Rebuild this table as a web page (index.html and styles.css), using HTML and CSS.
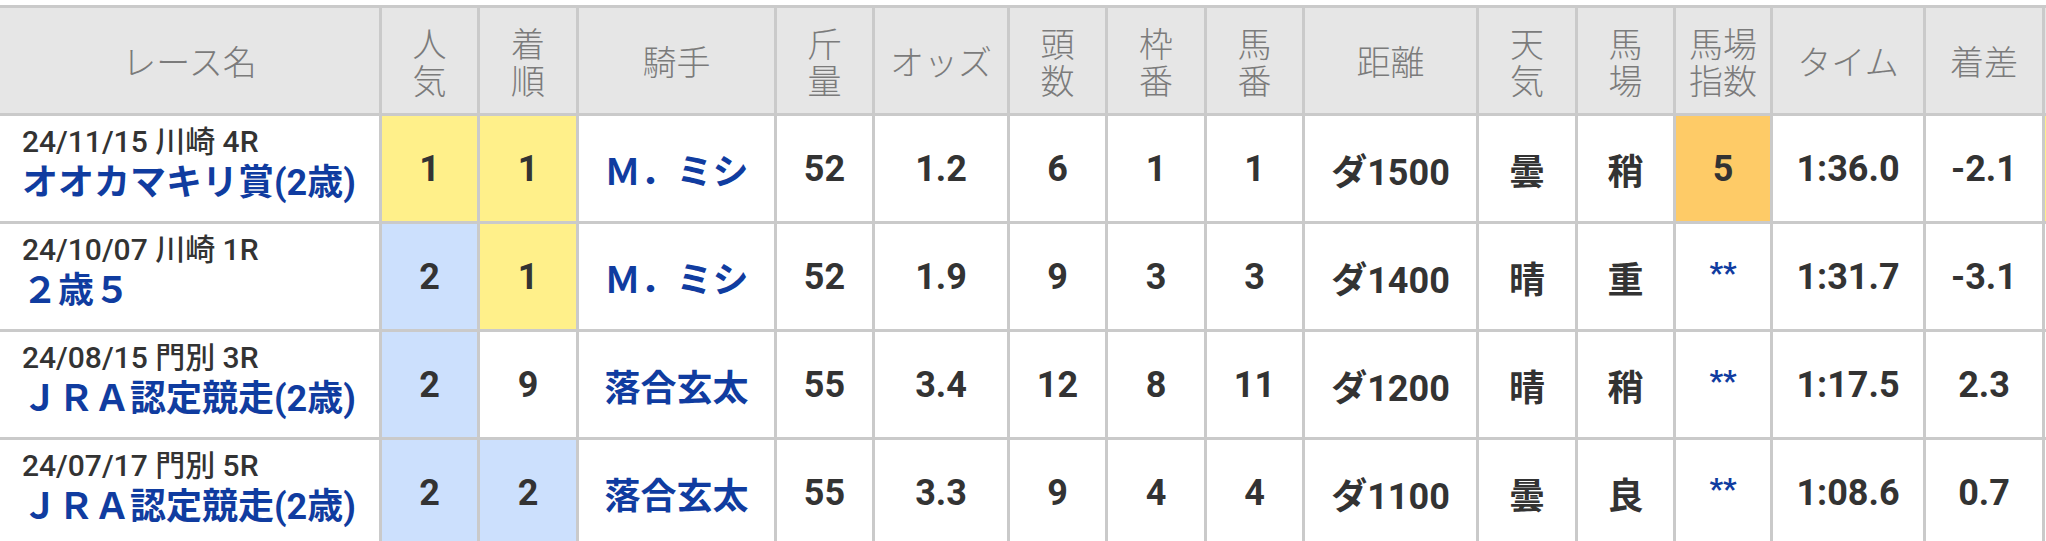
FILE: index.html
```html
<!DOCTYPE html>
<html lang="ja">
<head>
<meta charset="utf-8">
<title>戦績</title>
<link rel="stylesheet" href="styles.css">
</head>
<body>
<div class="wrap">
<table class="results">
  <thead>
    <tr>
      <th class="w-race">レース名</th>
      <th class="w-98">人<br>気</th>
      <th class="w-99">着<br>順</th>
      <th class="w-jockey">騎手</th>
      <th class="w-98">斤<br>量</th>
      <th class="w-odds">オッズ</th>
      <th class="w-98">頭<br>数</th>
      <th class="w-99">枠<br>番</th>
      <th class="w-98">馬<br>番</th>
      <th class="w-dist">距離</th>
      <th class="w-99">天<br>気</th>
      <th class="w-98">馬<br>場</th>
      <th class="w-97">馬場<br>指数</th>
      <th class="w-time">タイム</th>
      <th class="w-diff">着差</th>
      <th class="w-extra">&nbsp;</th>
    </tr>
  </thead>
  <tbody>
    <tr>
      <td class="race"><div class="date">24/11/15 川崎 4R</div><div class="name">オオカマキリ賞(2歳)</div></td>
      <td class="yellow">1</td>
      <td class="yellow">1</td>
      <td class="link">Ｍ．ミシ</td>
      <td>52</td>
      <td>1.2</td>
      <td>6</td>
      <td>1</td>
      <td>1</td>
      <td>ダ1500</td>
      <td>曇</td>
      <td>稍</td>
      <td class="orange">5</td>
      <td>1:36.0</td>
      <td>-2.1</td>
      <td class="yellow"></td>
    </tr>
    <tr>
      <td class="race"><div class="date">24/10/07 川崎 1R</div><div class="name">２歳５</div></td>
      <td class="blue">2</td>
      <td class="yellow">1</td>
      <td class="link">Ｍ．ミシ</td>
      <td>52</td>
      <td>1.9</td>
      <td>9</td>
      <td>3</td>
      <td>3</td>
      <td>ダ1400</td>
      <td>晴</td>
      <td>重</td>
      <td class="stars">**</td>
      <td>1:31.7</td>
      <td>-3.1</td>
      <td></td>
    </tr>
    <tr>
      <td class="race"><div class="date">24/08/15 門別 3R</div><div class="name">ＪＲＡ認定競走(2歳)</div></td>
      <td class="blue">2</td>
      <td>9</td>
      <td class="link">落合玄太</td>
      <td>55</td>
      <td>3.4</td>
      <td>12</td>
      <td>8</td>
      <td>11</td>
      <td>ダ1200</td>
      <td>晴</td>
      <td>稍</td>
      <td class="stars">**</td>
      <td>1:17.5</td>
      <td>2.3</td>
      <td></td>
    </tr>
    <tr>
      <td class="race"><div class="date">24/07/17 門別 5R</div><div class="name">ＪＲＡ認定競走(2歳)</div></td>
      <td class="blue">2</td>
      <td class="blue">2</td>
      <td class="link">落合玄太</td>
      <td>55</td>
      <td>3.3</td>
      <td>9</td>
      <td>4</td>
      <td>4</td>
      <td>ダ1100</td>
      <td>曇</td>
      <td>良</td>
      <td class="stars">**</td>
      <td>1:08.6</td>
      <td>0.7</td>
      <td></td>
    </tr>
  </tbody>
</table>
</div>
</body>
</html>
```

FILE: styles.css
```css
html, body {
  margin: 0;
  padding: 0;
  background: #ffffff;
}

.wrap {
  width: 100%;
  overflow: hidden;
  padding-top: 5px;
}

.results {
  table-layout: fixed;
  width: 2165px;
  border-collapse: separate;
  border-spacing: 0;
  border-top: 3px solid #cacaca;
  font-family: "Roboto", "Noto Sans CJK JP", sans-serif;
}

.results tr {
  height: 108px;
}

.results th,
.results td {
  box-sizing: border-box;
  border-right: 3px solid #cacaca;
  border-bottom: 3px solid #cacaca;
  text-align: center;
  vertical-align: middle;
  padding: 0;
}

.results th {
  background: #e6e6e6;
  color: #7b7b7b;
  font-family: "Noto Sans CJK JP", sans-serif;
  font-weight: 300;
  font-size: 34px;
  line-height: 37px;
}

.results td {
  color: #333333;
  font-size: 36px;
  font-weight: 700;
  white-space: nowrap;
}

.w-race { width: 382px; }
.w-97 { width: 97px; }
.w-98 { width: 98px; }
.w-99 { width: 99px; }
.w-jockey { width: 198px; }
.w-odds { width: 135px; }
.w-dist { width: 174px; }
.w-time { width: 153px; }
.w-diff { width: 119px; }
.w-extra { width: 120px; }

.results td.race {
  text-align: left;
  padding: 0 0 12px 22px;
}

.date {
  font-size: 30px;
  line-height: 40px;
  font-weight: 500;
  color: #333333;
}

.name {
  font-size: 36px;
  line-height: 42px;
  font-weight: 700;
  color: #103ca0;
}

.results td.link {
  color: #103ca0;
}

.results td.stars {
  color: #103ca0;
  font-size: 30px;
  padding-bottom: 8px;
}

.results td.yellow { background: #fff08a; }
.results td.blue { background: #cce0fd; }
.results td.orange { background: #fecb67; }
```
